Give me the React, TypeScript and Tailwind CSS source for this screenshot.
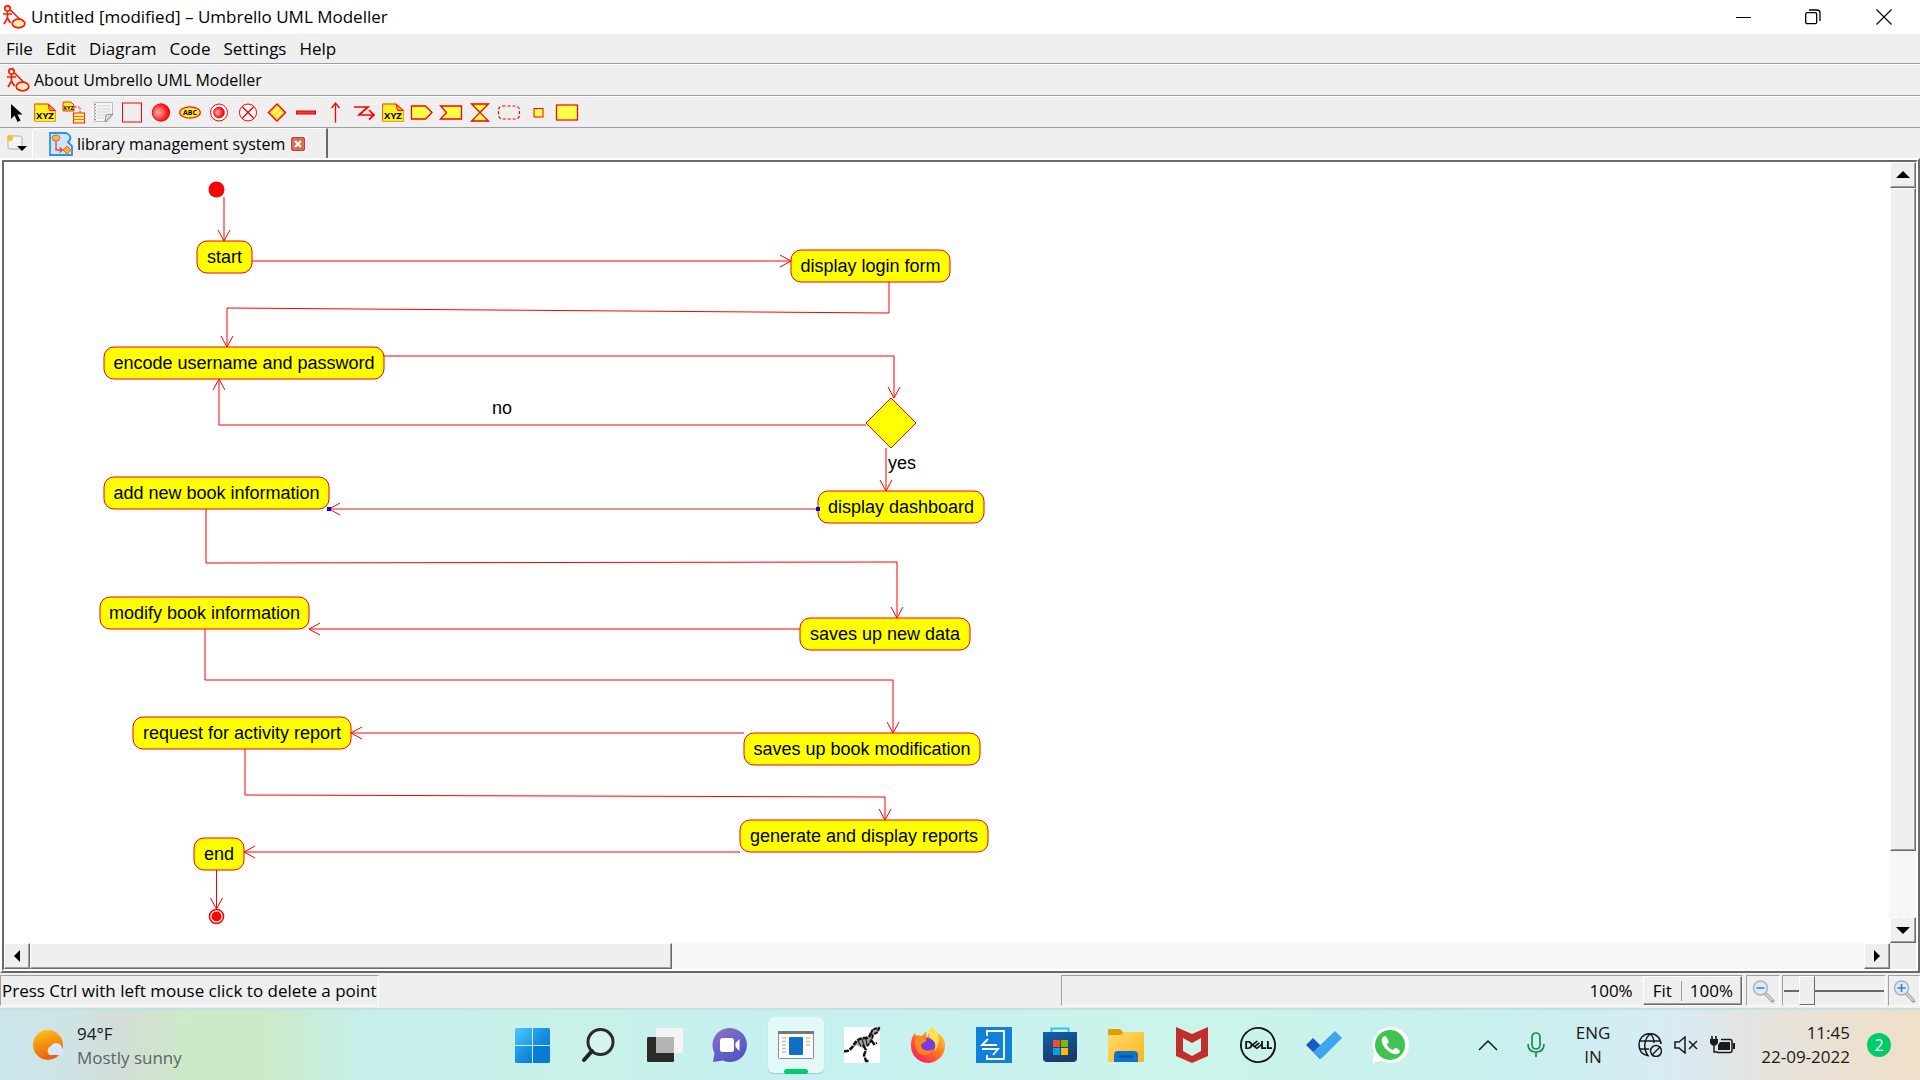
import React from "react";
import { SiDell } from "react-icons/si";

const raised =
  "border border-t-white border-l-white border-r-[#696969] border-b-[#696969] shadow-[inset_-1px_-1px_0_#a0a0a0] bg-[#efefef]";
const sunken = "border border-t-[#a0a0a0] border-l-[#a0a0a0] border-r-white border-b-white";

/* ---------- application icons ---------- */

function UmbrelloIcon() {
  return (
    <svg width="24" height="24" viewBox="0 0 24 24" fill="none" stroke="#ff1a0a" strokeWidth="1.7">
      <circle cx="5.500" cy="3.500" r="2.700" fill="#ffe9c8" />
      <path d="M5.500 6.200v7M1 9h9M5.500 13l-3.500 6M5.500 13l3 5M8.500 5l10 10" />
      <ellipse cx="16.500" cy="18.500" rx="6.300" ry="4.300" fill="#fff0b8" />
    </svg>
  );
}

function NoteXyz() {
  return (
    <>
      <path d="M1.500 4h14l7 6.500v11h-21z" fill="#ffee20" stroke="#e8a800" />
      <path d="M15 4l7.500 6.500h-6z" fill="#ff9a20" stroke="#ff1010" />
      <path d="M1.500 21V4H15" stroke="#ff5a10" fill="none" />
      <text x="12" y="19" textAnchor="middle" fontSize="9.500" fontWeight="700" fontFamily="Open Sans, sans-serif" fill="#000">
        XYZ
      </text>
    </>
  );
}

const tools: { name: string; draw: React.ReactNode }[] = [
  { name: "Select", draw: <path d="M7 4v15l3.500-3.500 3 6.500 3-1.500-3-6h5z" fill="#000" /> },
  { name: "Note", draw: <NoteXyz /> },
  {
    name: "Anchor",
    draw: (
      <>
        <path d="M1 2h8l3 3v6H1z" fill="#ffee20" stroke="#ff3010" />
        <text x="6.500" y="9.500" textAnchor="middle" fontSize="5.500" fontWeight="700" fontFamily="Open Sans, sans-serif" fill="#000">XYZ</text>
        <path d="M13 7h5v6" stroke="#f00" strokeDasharray="1.500 1.500" fill="none" />
        <rect x="11.500" y="13" width="11" height="10" fill="#fff27a" stroke="#ff2010" />
        <path d="M11.500 16.500h11M11.500 19.500h11" stroke="#ff6a30" />
      </>
    ),
  },
  {
    name: "Text line",
    draw: (
      <>
        <path d="M3.500 2.500h18v13l-5 6h-13z" fill="#f4f5f6" stroke="#b8bcc0" />
        <path d="M6 6h13M6 9h13M6 12h13M6 15h8M6 18h7" stroke="#c9d2da" />
        <path d="M4.500 4v17" stroke="#80868c" strokeDasharray="1 2" />
        <path d="M14 22l1-7 7-1z" fill="#e2e2e2" stroke="#8a8a8a" />
      </>
    ),
  },
  { name: "Box", draw: <rect x="2.500" y="3" width="19" height="19" fill="none" stroke="#f00" /> },
  { name: "Initial state", draw: <circle cx="12" cy="12.500" r="8.700" fill="url(#ball)" stroke="#f00" /> },
  {
    name: "Activity",
    draw: (
      <>
        <ellipse cx="12" cy="12.500" rx="10.300" ry="5.600" fill="#ffee20" stroke="#ff1010" strokeWidth="1.200" />
        <text x="12" y="15" textAnchor="middle" fontSize="7" fontWeight="700" fontFamily="Open Sans, sans-serif" fill="#000">ABC</text>
      </>
    ),
  },
  {
    name: "End activity",
    draw: (
      <>
        <circle cx="12" cy="12.500" r="8.500" fill="#fff" stroke="#f00" />
        <circle cx="12" cy="12.500" r="5.300" fill="url(#ball)" stroke="#f00" />
      </>
    ),
  },
  {
    name: "Final activity",
    draw: (
      <>
        <circle cx="12" cy="12.500" r="8.500" fill="#fff" stroke="#f00" />
        <path d="M6.500 7l11 11M17.500 7l-11 11" stroke="#f00" strokeWidth="1.400" />
      </>
    ),
  },
  {
    name: "Branch",
    draw: (
      <>
        <path d="M12 4l8.500 8.500-8.500 8.500-8.500-8.500z" fill="#ffe820" stroke="#f00" strokeWidth="1.400" />
        <path d="M8 13l6-5M11 17l5-5" stroke="#fff8b0" strokeWidth="2" />
      </>
    ),
  },
  { name: "Fork", draw: <rect x="2.500" y="11" width="19" height="3" fill="#ff3838" stroke="#e00000" /> },
  { name: "Activity transition", draw: <path d="M12.500 22.500V3M8.500 8l4-5 4 5" fill="none" stroke="#f00" strokeWidth="1.300" /> },
  { name: "Exception", draw: <path d="M2 7h14l-9 8h15M17 10l5 5-5 4.500" fill="none" stroke="#f00" strokeWidth="1.700" /> },
  { name: "Precondition", draw: <NoteXyz /> },
  { name: "Send signal", draw: <path d="M1.500 6h14l6.500 6.500-6.500 6.500h-14z" fill="#ffff48" stroke="#f00" strokeWidth="1.300" /> },
  { name: "Accept signal", draw: <path d="M1.500 6h21v13h-21l6-6.500z" fill="#ffff48" stroke="#f00" strokeWidth="1.300" /> },
  { name: "Accept time event", draw: <path d="M3.500 4h17l-17 17h17z" fill="#ffff48" stroke="#f00" strokeWidth="1.300" /> },
  { name: "Region", draw: <rect x="1.500" y="6" width="21" height="13" rx="4" fill="none" stroke="#f00" strokeWidth="1.200" strokeDasharray="3 2" /> },
  { name: "Pin", draw: <rect x="8" y="8.500" width="9" height="8.500" fill="#ffff48" stroke="#f00" /> },
  { name: "Object node", draw: <rect x="1.500" y="5" width="21" height="15" fill="#ffff48" stroke="#f00" strokeWidth="1.200" /> },
];

/* ---------- activity diagram ---------- */

const nodes = [
  { label: "start", x: 193, y: 79, w: 55 },
  { label: "display login form", x: 787, y: 88, w: 159 },
  { label: "encode username and password", x: 100, y: 185, w: 280 },
  { label: "add new book information", x: 100, y: 315, w: 225 },
  { label: "display dashboard", x: 814, y: 329, w: 166 },
  { label: "modify book information", x: 96, y: 435, w: 209 },
  { label: "saves up new data", x: 796, y: 456, w: 170 },
  { label: "request for activity report", x: 129, y: 555, w: 218 },
  { label: "saves up book modification", x: 740, y: 571, w: 236 },
  { label: "generate and display reports", x: 736, y: 658, w: 248 },
  { label: "end", x: 190, y: 676, w: 50 },
];

const heads: Record<string, string> = {
  down: "l-6 -11m6 11l6 -11",
  up: "l-6 11m6 -11l6 11",
  left: "l11 -6m-11 6l11 6",
  right: "l-11 -6m11 6l-11 6",
};

const edges = [
  { path: "M220 35V79", tip: "M220 79", dir: "down" },
  { path: "M248 99H787", tip: "M787 99", dir: "right" },
  { path: "M885 120V151L223 146V185", tip: "M223 185", dir: "down" },
  { path: "M380 194H890V236", tip: "M890 236", dir: "down" },
  { path: "M862 263H215V217", tip: "M215 217", dir: "up" },
  { path: "M882 286V329", tip: "M882 329", dir: "down" },
  { path: "M202 347V401L893 400V456", tip: "M893 456", dir: "down" },
  { path: "M796 467H305", tip: "M305 467", dir: "left" },
  { path: "M201 467V518H889V571", tip: "M889 571", dir: "down" },
  { path: "M740 571H347", tip: "M347 571", dir: "left" },
  { path: "M241 587V633L881 635V658", tip: "M881 658", dir: "down" },
  { path: "M736 690H240", tip: "M240 690", dir: "left" },
  { path: "M212.500 708V747", tip: "M212.500 747", dir: "down" },
];

function Diagram() {
  return (
    <svg className="absolute inset-0 h-full w-full" fontFamily="Liberation Sans, Arial, sans-serif" fontSize="18">
      <g fill="none" stroke="#ff0000">
        {edges.map((e) => (
          <path key={e.path} d={`${e.path} ${e.tip} ${heads[e.dir]}`} />
        ))}
        <path d="M814 347H325" stroke="#e89090" strokeWidth="2" />
        <path d="M325 347l11 -6m-11 6l11 6" />
      </g>
      <circle cx="212.500" cy="27.500" r="8" fill="#f00" />
      <circle cx="212.500" cy="754.500" r="7" fill="#fff" stroke="#f00" strokeWidth="1.600" />
      <circle cx="212.500" cy="754.500" r="5" fill="#f00" />
      <path d="M887 236l25 25-25 25-25-25z" fill="#ff0" stroke="#f00" />
      {nodes.map((n) => (
        <g key={n.label}>
          <rect x={n.x} y={n.y} width={n.w} height="32" rx="10" fill="#ff0" stroke="#f00" />
          <text x={n.x + n.w / 2} y={n.y + 22} textAnchor="middle">
            {n.label}
          </text>
        </g>
      ))}
      <text x="488" y="252">no</text>
      <text x="884" y="307">yes</text>
      <rect x="323" y="345" width="4" height="4" fill="#00f" />
      <rect x="812" y="345" width="4" height="4" fill="#00f" />
    </svg>
  );
}

/* ---------- scroll bars ---------- */

const dither = "bg-[conic-gradient(#fff_25%,#f0f0f0_0_50%,#fff_0_75%,#f0f0f0_0)] bg-[length:2px_2px]";

function ScrollButton({ label, d }: { label: string; d: string }) {
  return (
    <button aria-label={label} className={`flex size-[26px] shrink-0 items-center justify-center ${raised}`}>
      <svg width="14" height="14" viewBox="0 0 14 14">
        <path d={d} />
      </svg>
    </button>
  );
}

/* ---------- taskbar ---------- */

const apps: { name: string; active?: boolean; draw: React.ReactNode }[] = [
  {
    name: "Start",
    draw: (
      <>
        <path d="M2 1h16v17H1V2z" fill="url(#win1)" />
        <path d="M19 1h16l1 1v16H19z" fill="url(#win2)" />
        <path d="M1 19h17v17H2l-1-1z" fill="url(#win2)" />
        <path d="M19 19h17v16l-1 1H19z" fill="#0a7bd4" />
      </>
    ),
  },
  {
    name: "Search",
    draw: (
      <>
        <circle cx="20.500" cy="15" r="12.500" fill="#ffffff40" stroke="#2b2b2b" strokeWidth="3" />
        <path d="M12 24l-8 9" stroke="#222" strokeWidth="4" strokeLinecap="round" />
      </>
    ),
  },
  {
    name: "Task view",
    draw: (
      <>
        <rect x="1" y="10" width="27" height="25" rx="1.500" fill="#2a2a2a" />
        <rect x="10" y="1" width="27" height="25" rx="1" fill="#f4f4f4" />
        <path d="M10 10h18v16H10z" fill="#b4b4b4" />
      </>
    ),
  },
  {
    name: "Chat",
    draw: (
      <>
        <path d="M18 1a17 17 0 1 1-7 32.500L1 35l1.500-9A17 17 0 0 1 18 1z" fill="url(#chat)" />
        <rect x="8" y="11" width="14" height="14" rx="2.500" fill="#fff" />
        <path d="M23.500 16l4-4v12l-4-4z" fill="#fff" />
      </>
    ),
  },
  {
    name: "Umbrello UML Modeller",
    active: true,
    draw: (
      <>
        <rect x="0.500" y="4.500" width="35" height="27" rx="1" fill="#fafafa" stroke="#8c8c8c" />
        <path d="M0 4h36v3H0z" fill="#777" />
        <path d="M4 11h4M4 14.500h4M4 18h4M4 21.500h4M4 25h4M28 11h4M28 14.500h4M28 18h4" stroke="#c4c4c4" strokeWidth="1.600" />
        <rect x="11" y="10" width="14" height="18" rx="1" fill="#0f6fc4" />
      </>
    ),
  },
  {
    name: "Dinosaur",
    draw: (
      <>
        <path d="M0 0h36v36H0z" fill="#fff" />
        <path d="M0 24c4 1 7-2 9-5 3-5 6-8 12-8 4 0 5-2 6-5l2-4 6-1-1 4-5 3c-1 6-3 9-7 12-4 1-7 0-9-2-3 2-8 7-13 5z" fill="#a89ca4" />
        <path d="M0 24c4 1 7-2 9-5 3-5 6-8 12-8 4 0 5-2 6-5" fill="none" stroke="#111" strokeWidth="2.600" strokeDasharray="5 1" />
        <path d="M27 6l2-4 6-1-1 4-5 3c-1 5-3 8-6 11" fill="none" stroke="#111" strokeWidth="2" strokeDasharray="4 1" />
        <path d="M19 18l3 5-2 5 2 6h3M27 13l3 4 3-1" fill="none" stroke="#111" strokeWidth="2.400" strokeDasharray="6 1" />
        <path d="M14 14l3 5M18 12l2 7M22 12l1 6" stroke="#2a252a" strokeWidth="1.300" />
      </>
    ),
  },
  {
    name: "Firefox",
    draw: (
      <>
        <path d="M22 0c4 3 5 6 6 9 0-1 1-2 0-3 7 5 8 11 6.500 17A17 17 0 0 1 1.500 23C0 16 2 9 5 6c0 2 0 3 1 4 2-1 4-1 6-1 1-2 3-4 5-4-1 2-1 4 0 5 2-3 2-7 5-10z" fill="url(#fox)" />
        <circle cx="18" cy="18.500" r="7.500" fill="#7a3be0" />
        <path d="M3 8c4 0 9 0 12 3 2 1 2 3 0 4-3 1-4 2-4 4 1 5 8 6 13 3-3 6-11 8-16 3C5 21 4 14 6 11z" fill="#ff8a16" />
        <path d="M22 0c4 3 5 6 6 9 2 5 0 12-4 15 3-6 1-10-3-12-3-2-3-8 1-12z" fill="#ffe14a" />
      </>
    ),
  },
  {
    name: "Remote link",
    draw: (
      <>
        <path d="M0 0h36v36H0z" fill="#0f80dc" />
        <path d="M11 9V4h17v28H11v-4M12 12l-6 6h15M6 22h16l-5 6" fill="none" stroke="#fff" strokeWidth="1.800" />
      </>
    ),
  },
  {
    name: "Microsoft Store",
    draw: (
      <>
        <path d="M9.500 7V1.500h17V7" fill="none" stroke="#28c4f8" strokeWidth="2" />
        <path d="M1 5h34v26a4 4 0 0 1-4 4H5a4 4 0 0 1-4-4z" fill="url(#store)" />
        <path d="M11 13h7v7h-7z" fill="#f25022" />
        <path d="M19 13h7v7h-7z" fill="#7fba00" />
        <path d="M11 21h7v7h-7z" fill="#00a4ef" />
        <path d="M19 21h7v7h-7z" fill="#ffb900" />
      </>
    ),
  },
  {
    name: "File Explorer",
    draw: (
      <>
        <path d="M0 3a1 1 0 0 1 1-1h11l4 4v6H0z" fill="#dfa000" />
        <path d="M0 8h13l3-3h20v29a1 1 0 0 1-1 1H1a1 1 0 0 1-1-1z" fill="url(#folder)" />
        <path d="M6 35v-7a4 4 0 0 1 4-4h16a4 4 0 0 1 4 4v7z" fill="#0d72c8" />
        <path d="M11 29.500h14" stroke="#0a4f90" strokeWidth="2" />
      </>
    ),
  },
  {
    name: "McAfee",
    draw: (
      <path d="M2 0l16 7L34 0v29l-16 7-16-7zM9 11v13l9 5 9-5V11l-9 5z" fill="#c22e2c" fillRule="evenodd" />
    ),
  },
  { name: "Dell", draw: <SiDell size={36} color="#111" /> },
  {
    name: "To Do",
    draw: (
      <>
        <path d="M0 18l7-7 9 9-2 12z" fill="#185abd" />
        <path d="M7 25L29 4l7 7-21 21z" fill="#41a5ee" />
      </>
    ),
  },
  {
    name: "WhatsApp",
    draw: (
      <>
        <path d="M18 0a18 18 0 1 1-8 33.500L0 36l2.500-9.500A18 18 0 0 1 18 0z" fill="#fff" />
        <circle cx="18" cy="18" r="15" fill="#43c254" />
        <path d="M12 9c-5 4-1 10 3 14s10 6 13 2c0-2-3-4-5-4l-2 2c-3-1-6-4-6-6l2-2c-1-2-2-6-5-6z" fill="#fff" />
      </>
    ),
  },
];

function Gradients() {
  return (
    <svg className="absolute size-0" aria-hidden="true">
      <defs>
        <radialGradient id="ball" cx="0.350" cy="0.500" r="0.700">
          <stop offset="0" stopColor="#ffb0b0" />
          <stop offset="0.600" stopColor="#ff3030" />
          <stop offset="1" stopColor="#d00000" />
        </radialGradient>
        <linearGradient id="win1" x2="1" y2="1"><stop stopColor="#4cc8fb" /><stop offset="1" stopColor="#1f9be8" /></linearGradient>
        <linearGradient id="win2" x2="1" y2="1"><stop stopColor="#2aa4ee" /><stop offset="1" stopColor="#0a7ad6" /></linearGradient>
        <linearGradient id="chat" x2="0.600" y2="1"><stop stopColor="#a070b8" /><stop offset="0.500" stopColor="#6866c8" /><stop offset="1" stopColor="#5454c0" /></linearGradient>
        <linearGradient id="fox" x1="1" x2="0.200" y2="1"><stop stopColor="#ffe840" /><stop offset="0.500" stopColor="#ff8020" /><stop offset="1" stopColor="#ff1460" /></linearGradient>
        <linearGradient id="store" x2="0.400" y2="1"><stop stopColor="#0d63b0" /><stop offset="1" stopColor="#20386a" /></linearGradient>
        <linearGradient id="folder" x2="1" y2="1"><stop stopColor="#ffdc70" /><stop offset="1" stopColor="#fcb612" /></linearGradient>
        <linearGradient id="sun" x2="0.300" y2="1"><stop stopColor="#ffc810" /><stop offset="1" stopColor="#ea6210" /></linearGradient>
      </defs>
    </svg>
  );
}

function Magnifier({ plus }: { plus?: boolean }) {
  return (
    <svg width="24" height="24" viewBox="0 0 24 24" fill="none">
      <path d="M14 14l7.500 8" stroke="#a8a8a8" strokeWidth="3.500" strokeLinecap="round" />
      <path d="M14 14l7 7.500" stroke="#d8d8d8" strokeWidth="1.500" />
      <circle cx="9.500" cy="9" r="7" fill="#dce9f7" stroke="#a3b4c6" strokeWidth="1.500" />
      <path d={plus ? "M5.500 9h8M9.500 5v8" : "M5.500 9h8"} stroke="#4a78b8" strokeWidth="1.500" />
    </svg>
  );
}

const menus = ["File", "Edit", "Diagram", "Code", "Settings", "Help"];

export default function App() {
  return (
    <div className="flex h-screen flex-col overflow-hidden bg-[#efefef] font-['Open_Sans','Noto_Sans',sans-serif] text-[17px] leading-6 text-black">
      <Gradients />

      <header className="flex h-[34px] shrink-0 items-center bg-white pl-0.5">
        <UmbrelloIcon />
        <h1 className="ml-[5px] flex-1 text-[17px]">Untitled [modified] – Umbrello UML Modeller</h1>
        <button aria-label="Minimize" className="flex h-full w-[70px] items-center justify-center">
          <svg width="16" height="16"><path d="M1 8.500h15" stroke="#000" /></svg>
        </button>
        <button aria-label="Restore" className="flex h-full w-[70px] items-center justify-center">
          <svg width="16" height="16" fill="none" stroke="#000" strokeWidth="1.300">
            <rect x="0.700" y="3.700" width="11" height="11" rx="1.500" />
            <path d="M4 1h8a3 3 0 0 1 3 3v8" />
          </svg>
        </button>
        <button aria-label="Close" className="flex h-full w-[72px] items-center justify-center">
          <svg width="16" height="16" stroke="#000" strokeWidth="1.200"><path d="M.500 .500l15 15M15.500 .500l-15 15" /></svg>
        </button>
      </header>

      <nav className="flex h-[31px] shrink-0 items-center gap-[13px] border-b border-white pl-1.5 shadow-[inset_0_-1px_0_#a0a0a0]">
        {menus.map((m) => (
          <button key={m}>{m}</button>
        ))}
      </nav>

      <div className="flex h-8 shrink-0 items-center border-b border-white pb-0.5 pl-1.5 shadow-[inset_0_-1px_0_#a0a0a0]">
        <button className="flex items-center gap-1 text-base">
          <UmbrelloIcon />
          About Umbrello UML Modeller
        </button>
      </div>

      <div role="toolbar" aria-label="Diagram tools" className="flex h-[31px] shrink-0 items-center border-b border-[#a0a0a0] pb-px pl-px">
        {tools.map((t) => (
          <button key={t.name} aria-label={t.name} className="flex h-7 w-[29px] items-center justify-center">
            <svg width="24" height="24" viewBox="0 0 24 24">{t.draw}</svg>
          </button>
        ))}
      </div>

      <div role="tablist" className="flex h-[30px] shrink-0 items-stretch">
        <button aria-label="New diagram" className="flex w-8 items-center justify-end pr-1">
          <svg width="24" height="24" viewBox="0 0 24 24">
            <rect x="4" y="5" width="14" height="13" rx="2" fill="#f4f4f4" stroke="#b0b0b0" />
            <circle cx="6" cy="7" r="3" fill="#f0c030" />
            <path d="M13 15h10l-5 5z" />
          </svg>
        </button>
        <div className="flex items-center rounded-tl-sm border-t border-l border-r-2 border-t-white border-l-white border-r-[#696969] pl-4">
          <button role="tab" aria-selected="true" className="flex items-center gap-1 text-base">
            <svg width="24" height="24" viewBox="0 0 24 24">
              <path d="M1 1h16c5 2 6 6 2 9l4 4v9H1z" fill="#c9e6fa" stroke="#2a94e4" strokeWidth="1.800" />
              <ellipse cx="7" cy="6" rx="4" ry="3" fill="#ffb060" stroke="#d86a30" />
              <path d="M7 9v9h6M10.500 15.500l3 2.500-3 2.500" fill="none" stroke="#e84a3a" strokeWidth="1.400" />
              <path d="M18 14l4 4-4 4-4-4z" fill="#ffb020" stroke="#ff5a30" />
            </svg>
            library management system
          </button>
          <button aria-label="Close tab" className="mr-[21px] ml-1.5">
            <svg width="14" height="14" viewBox="0 0 14 14">
              <rect x="0.500" y="0.500" width="13" height="13" rx="1.500" fill="#dd6b50" stroke="#b84830" />
              <path d="M4 4l6 6M10 4l-6 6" stroke="#fff" strokeWidth="2.200" />
            </svg>
          </button>
        </div>
      </div>

      <main className="flex min-h-0 flex-1 border-2 border-t-white border-r-[#696969] border-b-[#696969] border-l-white">
        <div className="flex min-w-0 flex-1 border-2 border-t-[#696969] border-r-white border-b-white border-l-[#696969]">
          <div className="flex min-w-0 flex-1 flex-col">
            <div className="relative min-h-0 flex-1 overflow-hidden bg-white">
              <Diagram />
            </div>
            <div className="flex">
              <ScrollButton label="Scroll left" d="M10 1v12L4 7z" />
              <div className={`flex flex-1 ${dither}`}>
                <div className={`w-[35%] ${raised}`} />
              </div>
              <ScrollButton label="Scroll right" d="M4 1v12l6-6z" />
            </div>
          </div>
          <div className="flex w-[26px] flex-col">
            <ScrollButton label="Scroll up" d="M0 10h14L7 3z" />
            <div className={`flex-1 ${dither}`}>
              <div className={`h-[91%] ${raised}`} />
            </div>
            <ScrollButton label="Scroll down" d="M0 4h14l-7 7z" />
            <div className="h-[26px]" />
          </div>
        </div>
      </main>

      <footer className="flex h-[35px] shrink-0 items-stretch pt-0.5 pb-0.5">
        <div className={`flex items-center pr-px pl-px ${sunken}`}>Press Ctrl with left mouse click to delete a point</div>
        <div className="flex-1" />
        <div className={`flex w-[682px] items-stretch justify-end ${sunken}`}>
          <span className="mr-2.5 flex items-center">100%</span>
          <div className={`flex items-center ${raised}`}>
            <button className="px-[9px]">Fit</button>
            <span className="h-5 w-px bg-[#a0a0a0]" />
            <button className="px-2">100%</button>
          </div>
        </div>
        <button aria-label="Zoom out" className={`ml-[3px] flex w-[34px] items-center justify-center ${sunken}`}>
          <Magnifier />
        </button>
        <div className={`ml-0.5 flex w-[104px] items-center px-px ${sunken}`}>
          <input
            type="range"
            aria-label="Zoom"
            defaultValue={18}
            className="h-full w-full appearance-none bg-[linear-gradient(#696969,#696969)] bg-[length:100%_2px] bg-center bg-no-repeat [&::-webkit-slider-thumb]:h-[29px] [&::-webkit-slider-thumb]:w-4 [&::-webkit-slider-thumb]:appearance-none [&::-webkit-slider-thumb]:border [&::-webkit-slider-thumb]:border-t-white [&::-webkit-slider-thumb]:border-r-[#696969] [&::-webkit-slider-thumb]:border-b-[#696969] [&::-webkit-slider-thumb]:border-l-white [&::-webkit-slider-thumb]:bg-[#efefef]"
          />
        </div>
        <button aria-label="Zoom in" className={`ml-0.5 flex w-8 items-center justify-center ${sunken}`}>
          <Magnifier plus />
        </button>
      </footer>

      <div className="grid h-[72px] shrink-0 grid-cols-[1fr_auto_1fr] items-center border-t-2 border-[#bfe2df] bg-[linear-gradient(90deg,#cce5ec_0%,#cfe3e4_4%,#d2ddd8_6%,#cdeac8_10%,#cdeac8_14%,#c6efec_19%,#c8f1e8_30%,#c6f0f0_40%,#cbf4ea_62%,#c8f0ee_78%,#d8ebf5_87%,#e6e3dd_92%,#f0dfc8_100%)]">
        <button className="flex items-center pt-0.5 pl-8 text-left">
          <svg width="34" height="34" viewBox="0 0 34 34">
            <circle cx="16" cy="16" r="15" fill="url(#sun)" />
            <path d="M18 26a5 5 0 0 1 1-9 6 6 0 0 1 11 2 4 4 0 0 1-1 7z" fill="#dbe6fa" />
          </svg>
          <span className="ml-[11px]">
            <span className="block text-[#1a1a1a]">94°F</span>
            <span className="block text-[#5c6664]">Mostly sunny</span>
          </span>
        </button>
        <div className="flex gap-2.5 pl-0.5">
          {apps.map((a) => (
            <button
              key={a.name}
              aria-label={a.name}
              className={
                a.active
                  ? "relative flex size-14 items-center justify-center rounded-md bg-white/50 shadow-[0_1px_1px_#9ccccc]"
                  : "flex size-14 items-center justify-center"
              }
            >
              <svg width="36" height="36" viewBox="0 0 36 36" overflow="visible">{a.draw}</svg>
              {a.active && <span className="absolute -bottom-px h-[5px] w-6 rounded-full bg-[#00cc6a]" />}
            </button>
          ))}
        </div>
        <div className="flex items-center justify-end pr-[29px] text-[#1a1a1a]">
          <button aria-label="Show hidden icons" className="mr-[29px]">
            <svg width="20" height="12" fill="none" stroke="#1a1a1a" strokeWidth="1.500"><path d="M1 11l9-9 9 9" /></svg>
          </button>
          <button aria-label="Microphone" className="mr-[31px]">
            <svg width="18" height="26" viewBox="0 0 18 26" fill="none" stroke="#1c8a4c" strokeWidth="1.700">
              <rect x="5" y="1" width="8" height="16" rx="4" />
              <path d="M1 12c0 5 3 8 8 8s8-3 8-8M9 20v5" />
            </svg>
          </button>
          <button className="mr-7 text-center">
            <span className="block">ENG</span>
            <span className="block">IN</span>
          </button>
          <button aria-label="Network, sound and battery" className="mr-[26px] flex items-center gap-3">
            <svg width="24" height="24" viewBox="0 0 24 24" fill="none" stroke="#1a1a1a" strokeWidth="1.500">
              <path d="M11 23C5 22 1 18 1 12a11 11 0 0 1 22-1M2 8h20M2 16h9M10 23c-5-7-4-17 2-22 3 2 4 6 4 9" />
              <circle cx="18" cy="18" r="5.500" />
              <path d="M14 22l8-8" />
            </svg>
            <svg width="24" height="18" viewBox="0 0 24 18" fill="none" stroke="#1a1a1a" strokeWidth="1.500">
              <path d="M1 6h4l6-5v16l-6-5H1zM15 5l8 8M23 5l-8 8" />
            </svg>
            <svg width="25" height="20" viewBox="0 0 25 20">
              <path d="M2 1v4M6 1v4" stroke="#1a1a1a" strokeWidth="1.600" />
              <path d="M0 4h8v4l-2 2.500H2L0 8z" fill="#1a1a1a" />
              <path d="M4 10v7h4M11 4.500h9a2 2 0 0 1 2 2v9a2 2 0 0 1-2 2H7" fill="none" stroke="#1a1a1a" strokeWidth="1.500" />
              <path d="M10 7h10v8H8v-5zM23 8h2v6h-2z" fill="#1a1a1a" />
            </svg>
          </button>
          <button className="mr-[17px] text-right">
            <span className="block">11:45</span>
            <span className="block">22-09-2022</span>
          </button>
          <span className="flex size-6 items-center justify-center rounded-full bg-[#00cc6a] text-base text-white">2</span>
        </div>
      </div>
    </div>
  );
}
